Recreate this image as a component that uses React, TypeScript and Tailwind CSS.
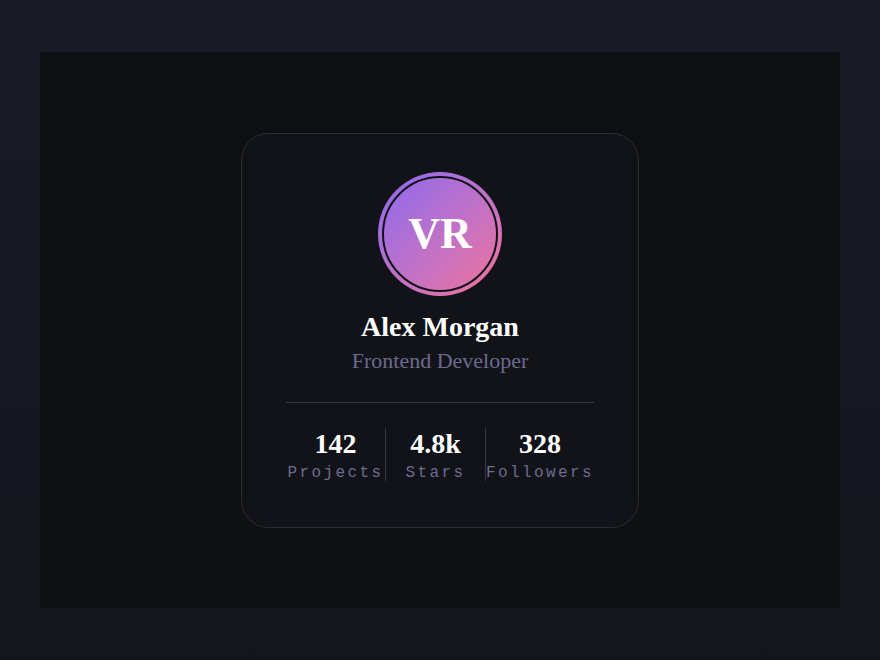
import React from "react";

const serif = { fontFamily: '"Liberation Serif", "Times New Roman", serif' };
const mono = { fontFamily: '"Courier New", Courier, "Nimbus Mono PS", FreeMono, "Liberation Mono", monospace' };

function Stat({ value, label, first }: { value: string; label: string; first?: boolean }) {
  return (
    <div className={`flex-1 flex flex-col items-center text-center ${first ? "" : "border-l border-[#393a41]"}`}>
      <div className="text-[28px] leading-[32px] font-bold text-white" style={serif}>
        {value}
      </div>
      <div className="mt-[5px] text-[16px] leading-[16px] tracking-[0.15em] text-[#6e6b8f] whitespace-nowrap" style={mono}>
        {label}
      </div>
    </div>
  );
}

export default function App() {
  return (
    <div className="w-[880px] h-[660px] bg-gradient-to-b from-[#1a1a27] to-[#15151e] flex items-center justify-center">
      <div className="w-[800px] h-[556px] bg-[#0e0f13] flex items-center justify-center">
        <div className="w-[398px] h-[395px] rounded-[27px] border border-[#2c2d33] bg-[#121318] flex flex-col items-center px-[44px] pt-[38px]">
          <div className="w-[124px] h-[124px] rounded-full bg-gradient-to-br from-[#8a66f2] to-[#f2709a] p-[4px]">
            <div className="w-full h-full rounded-full border-2 border-[#121318] flex items-center justify-center">
              <span className="text-[44px] leading-none font-bold text-white" style={serif}>
                VR
              </span>
            </div>
          </div>
          <div className="mt-[15px] text-[28px] leading-[32px] font-bold text-white" style={serif}>
            Alex Morgan
          </div>
          <div className="mt-[5px] text-[22px] leading-[26px] text-[#6c6a8e]" style={serif}>
            Frontend Developer
          </div>
          <div className="mt-[28px] w-full h-px bg-[#393a41]" />
          <div className="mt-[25px] w-full flex">
            <Stat value="142" label="Projects" first />
            <Stat value="4.8k" label="Stars" />
            <Stat value="328" label="Followers" />
          </div>
        </div>
      </div>
    </div>
  );
}
